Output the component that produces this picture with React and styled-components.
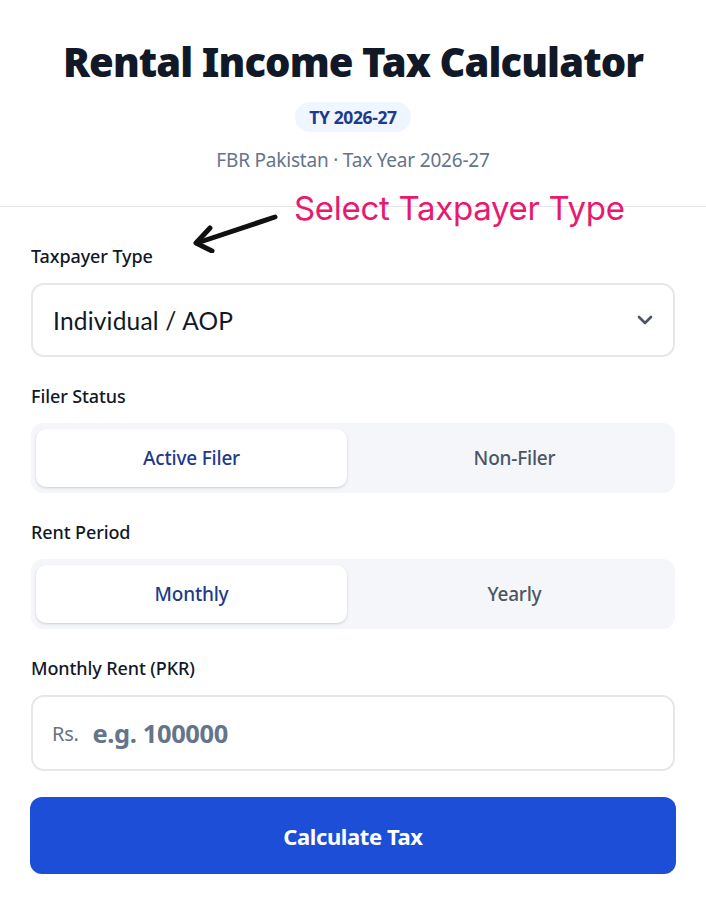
import React from "react";
import styled, { createGlobalStyle } from "styled-components";

const Global = createGlobalStyle`
  html, body { margin: 0; padding: 0; background: #ffffff; }
  body { font-family: "Noto Sans", "Open Sans", sans-serif; color: #111827; }
  * { box-sizing: border-box; }
`;

const Page = styled.div`
  position: relative;
  width: 706px;
  min-height: 907px;
  background: #fff;
`;

const Header = styled.header`
  display: flex;
  flex-direction: column;
  align-items: center;
  padding: 36px 30px 0;
  height: 207px;
  border-bottom: 1px solid #e5e7eb;
`;

const Title = styled.h1`
  margin: 0;
  font-family: "Noto Sans", sans-serif;
  font-weight: 900;
  font-size: 40px;
  line-height: 52px;
  letter-spacing: -0.9px;
  color: #111827;
`;

const Badge = styled.span`
  margin-top: 14px;
  display: inline-flex;
  align-items: center;
  height: 30px;
  padding: 0 14px;
  border-radius: 15px;
  background: #eff6ff;
  color: #1e3a8a;
  font-weight: 700;
  font-size: 17.5px;
  letter-spacing: -0.4px;
`;

const Subtitle = styled.p`
  margin: 15px 0 0;
  font-size: 19px;
  line-height: 26px;
  color: #64748b;
  letter-spacing: -0.2px;
`;

const Form = styled.form`
  display: flex;
  flex-direction: column;
  gap: 28px;
  padding: 38px 30px 0;
`;

const Field = styled.div`
  display: flex;
  flex-direction: column;
  gap: 16px;
`;

const Label = styled.label`
  font-size: 18px;
  line-height: 22px;
  font-weight: 500;
  color: #111827;
  letter-spacing: -0.1px;
  padding-left: 1px;
`;

const SelectBox = styled.div`
  display: flex;
  align-items: center;
  justify-content: space-between;
  height: 74px;
  margin: 0 1px;
  padding: 0 16px 0 20px;
  border: 2px solid #e5e7eb;
  border-radius: 13px;
  background: #fff;
  font-family: "Lato", "Noto Sans", sans-serif;
  font-size: 24.5px;
  letter-spacing: 0.2px;
  color: #111827;
`;

const Segmented = styled.div`
  display: grid;
  grid-template-columns: 1fr 1fr;
  column-gap: 12px;
  height: 70px;
  padding: 6px 5px;
  margin: 0 1px;
  border-radius: 12px;
  background: #f4f6fa;
`;

const Segment = styled.button`
  border: none;
  border-radius: 10px;
  font-family: "Noto Sans", sans-serif;
  font-size: 19px;
  font-weight: 500;
  letter-spacing: -0.2px;
  cursor: pointer;
  background: ${(p) => (p.$active ? "#ffffff" : "transparent")};
  color: ${(p) => (p.$active ? "#1e3a8a" : "#4b5563")};
  box-shadow: ${(p) =>
    p.$active ? "0 1px 3px rgba(15,23,42,0.12), 0 1px 2px rgba(15,23,42,0.06)" : "none"};
`;

const InputBox = styled.div`
  display: flex;
  align-items: center;
  gap: 14px;
  height: 76px;
  margin: 0 1px;
  padding: 0 19px;
  border: 2px solid #e5e7eb;
  border-radius: 13px;
  background: #fff;
`;

const Prefix = styled.span`
  font-size: 20px;
  color: #6b7280;
  letter-spacing: -0.3px;
`;

const Input = styled.input`
  flex: 1;
  border: none;
  outline: none;
  font-family: "Noto Sans", sans-serif;
  font-size: 25.5px;
  font-weight: 700;
  letter-spacing: -0.4px;
  color: #111827;
  background: transparent;
  padding: 0;
  &::placeholder { color: #64748b; }
`;

const Submit = styled.button`
  margin-top: -2px;
  height: 77px;
  border: none;
  border-radius: 12px;
  background: #1d4ed8;
  color: #fff;
  font-family: "Noto Sans", sans-serif;
  font-size: 22px;
  font-weight: 700;
  letter-spacing: -0.4px;
  cursor: pointer;
`;

const Annotation = styled.div`
  position: absolute;
  left: 190px;
  top: 187px;
  display: flex;
  align-items: flex-start;
  gap: 12px;
  pointer-events: none;
`;

const AnnotationText = styled.span`
  font-family: "Inter", sans-serif;
  font-size: 33px;
  line-height: 42px;
  color: #e8196f;
  letter-spacing: -0.3px;
`;

const Chevron = () => (
  <svg width="24" height="24" viewBox="0 0 24 24" fill="none" stroke="#4b5563" strokeWidth="2.6" strokeLinecap="round" strokeLinejoin="round">
    <path d="M6 9l6 6 6-6" />
  </svg>
);

const Arrow = () => (
  <svg width="92" height="66" viewBox="0 0 92 66" fill="none" stroke="#111" strokeWidth="5" strokeLinecap="round" strokeLinejoin="round">
    <path d="M85 30 L 7 56" />
    <path d="M20 41 L 6 56 L 22 64" />
  </svg>
);

export default function App() {
  return (
    <>
      <Global />
      <Page>
        <Header>
          <Title>Rental Income Tax Calculator</Title>
          <Badge>TY 2026-27</Badge>
          <Subtitle>FBR Pakistan · Tax Year 2026-27</Subtitle>
        </Header>
        <Annotation>
          <Arrow />
          <AnnotationText>Select Taxpayer Type</AnnotationText>
        </Annotation>
        <Form onSubmit={(e) => e.preventDefault()}>
          <Field>
            <Label>Taxpayer Type</Label>
            <SelectBox>
              <span>Individual / AOP</span>
              <Chevron />
            </SelectBox>
          </Field>
          <Field>
            <Label>Filer Status</Label>
            <Segmented>
              <Segment type="button" $active>Active Filer</Segment>
              <Segment type="button">Non-Filer</Segment>
            </Segmented>
          </Field>
          <Field>
            <Label>Rent Period</Label>
            <Segmented>
              <Segment type="button" $active>Monthly</Segment>
              <Segment type="button">Yearly</Segment>
            </Segmented>
          </Field>
          <Field>
            <Label>Monthly Rent (PKR)</Label>
            <InputBox>
              <Prefix>Rs.</Prefix>
              <Input placeholder="e.g. 100000" />
            </InputBox>
          </Field>
          <Submit type="submit">Calculate Tax</Submit>
        </Form>
      </Page>
    </>
  );
}
